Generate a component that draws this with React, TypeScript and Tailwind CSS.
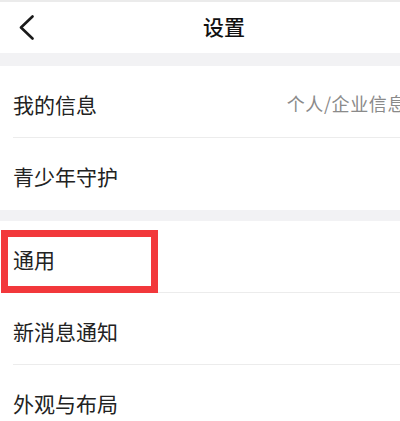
import React from "react";

const font = { fontFamily: '"Noto Sans CJK SC", "Noto Sans", sans-serif' };

function Row({
  label,
  right,
  divider = true,
  children,
}: {
  label: string;
  right?: string;
  divider?: boolean;
  children?: React.ReactNode;
}) {
  return (
    <div className="relative flex h-[72px] items-center bg-white pl-[13px]">
      <span className="pt-[4px] text-[21px] leading-none text-[#222]">{label}</span>
      {right && (
        <span className="ml-auto -mr-[6px] whitespace-nowrap pt-[2px] text-[18px] leading-none tracking-[0.6px] text-[#8a8a8a]">
          {right}
        </span>
      )}
      {divider && (
        <div className="absolute bottom-0 left-[13px] right-0 h-px bg-[#ececec]" />
      )}
      {children}
    </div>
  );
}

export default function App() {
  return (
    <div className="h-[421px] w-[400px] overflow-hidden bg-white" style={font}>
      {/* header */}
      <div className="relative flex h-[53px] items-center border-t-2 border-[#ebebeb] bg-white">
        <svg
          className="absolute left-[18px] top-[12px]"
          width="18"
          height="26"
          viewBox="0 0 18 26"
          fill="none"
        >
          <polyline
            points="14.5,2.5 3,13.5 14.5,24.5"
            stroke="#1a1a1a"
            strokeWidth="2.6"
            strokeLinecap="round"
            strokeLinejoin="round"
          />
        </svg>
        <div className="flex flex-1 justify-center pb-[3px] pl-12">
          <span className="text-[21px] font-medium leading-none text-[#111]">设置</span>
        </div>
      </div>

      <div className="h-[13px] bg-[#f2f2f4]" />

      <Row label="我的信息" right="个人/企业信息" />
      <Row label="青少年守护" divider={false} />

      <div className="h-[11px] bg-[#f2f2f4]" />

      <Row label="通用">
        <div className="absolute left-[1px] top-[9px] h-[63px] w-[157px] border-[7px] border-[#f2383b]" />
      </Row>
      <Row label="新消息通知" />
      <Row label="外观与布局" />
    </div>
  );
}
